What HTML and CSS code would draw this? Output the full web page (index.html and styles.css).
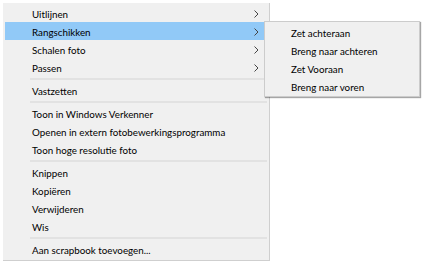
FILE: index.html
```html
<!DOCTYPE html>
<html lang="nl">

<head>
    <meta charset="UTF-8">
    <meta name="viewport" content="width=device-width, initial-scale=1.0">
    <title>Contextmenu</title>
    <link rel="stylesheet" href="styles.css">
</head>

<body>
    <div class="menu">
        <div class="item">Uitlijnen<span class="arrow"><svg width="5" height="8" viewBox="0 0 5 8"><polyline points="0.5,0.5 4,4 0.5,7.5" fill="none" stroke="#444" stroke-width="1"/></svg></span></div>
        <div class="item active">Rangschikken<span class="arrow"><svg width="5" height="8" viewBox="0 0 5 8"><polyline points="0.5,0.5 4,4 0.5,7.5" fill="none" stroke="#444" stroke-width="1"/></svg></span></div>
        <div class="item">Schalen foto<span class="arrow"><svg width="5" height="8" viewBox="0 0 5 8"><polyline points="0.5,0.5 4,4 0.5,7.5" fill="none" stroke="#444" stroke-width="1"/></svg></span></div>
        <div class="item">Passen<span class="arrow"><svg width="5" height="8" viewBox="0 0 5 8"><polyline points="0.5,0.5 4,4 0.5,7.5" fill="none" stroke="#444" stroke-width="1"/></svg></span></div>
        <div class="sep"></div>
        <div class="item">Vastzetten</div>
        <div class="sep"></div>
        <div class="item">Toon in Windows Verkenner</div>
        <div class="item">Openen in extern fotobewerkingsprogramma</div>
        <div class="item">Toon hoge resolutie foto</div>
        <div class="sep"></div>
        <div class="item">Knippen</div>
        <div class="item">Kopiëren</div>
        <div class="item">Verwijderen</div>
        <div class="item">Wis</div>
        <div class="sep"></div>
        <div class="item">Aan scrapbook toevoegen...</div>
    </div>

    <div class="submenu">
        <div class="item">Zet achteraan</div>
        <div class="item">Breng naar achteren</div>
        <div class="item">Zet Vooraan</div>
        <div class="item">Breng naar voren</div>
    </div>
</body>

</html>
```

FILE: styles.css
```css
body {
    margin: 0;
    padding: 0;
    background: #fff;
    font-family: Lato, "Liberation Sans", sans-serif;
    font-size: 9.8px;
    color: #000;
}

.menu {
    margin: 3px 0 0 3px;
    width: 262px;
    padding: 1px 2px 2px 2px;
    background-color: #f0f0f0;
    border-right: 1px solid #cfcfcf;
    border-bottom: 1px solid #cfcfcf;
}

.item {
    display: flex;
    align-items: center;
    justify-content: space-between;
    height: 18px;
    line-height: 18px;
    padding-left: 27px;
    padding-right: 8px;
    padding-top: 1px;
    box-sizing: border-box;
    white-space: nowrap;
}

.item.active {
    background-color: #91c9f7;
}

.arrow {
    display: flex;
    align-items: center;
}

.sep {
    height: 5px;
    display: flex;
    align-items: center;
    padding-left: 25px;
}

.sep::after {
    content: "";
    flex: 1;
    height: 2px;
    background-color: #e2e2e2;
}

.submenu {
    position: absolute;
    left: 264px;
    top: 21px;
    width: 150px;
    padding: 1px 2px;
    background-color: #f0f0f0;
    border: 1px solid #cccccc;
    box-shadow: 1px 1px 1px rgba(0, 0, 0, 0.35);
}

.submenu .item {
    padding-left: 24px;
}
```
